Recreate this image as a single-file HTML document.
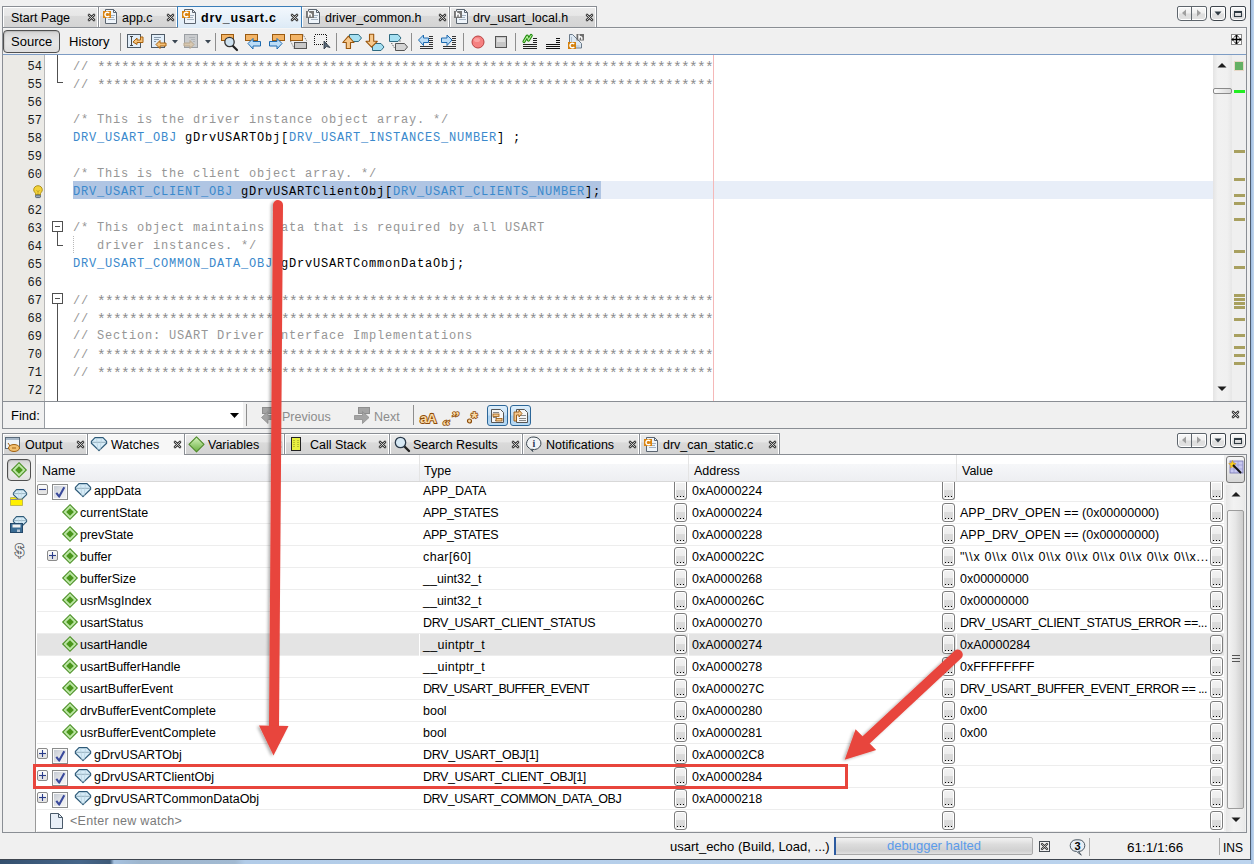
<!DOCTYPE html><html><head><meta charset="utf-8"><style>
*{box-sizing:border-box}
html,body{margin:0;padding:0}
body{width:1254px;height:864px;overflow:hidden;position:relative;background:#F0F0F0;font-family:"Liberation Sans",sans-serif;font-size:12.5px;color:#000}
.a{position:absolute}
svg{position:absolute;overflow:visible}
.tab{position:absolute;top:6px;height:22px;border:1px solid #8A8E94;border-bottom:none;background:linear-gradient(#EBEBEB 0,#E7E7E7 40%,#DADADA 44%,#D3D3D3 100%);box-shadow:inset 1px 1px 0 #fff,inset -1px 0 0 #fff}
.code{position:absolute;left:73px;font-family:"Liberation Mono",monospace;font-size:12px;letter-spacing:0.8px;white-space:pre;line-height:18px;height:18px}
.ln{position:absolute;left:3px;width:38px;text-align:right;font-family:"Liberation Mono",monospace;font-size:12px;letter-spacing:0;line-height:18px;color:#1A1A1A}
.c{color:#969696}
.st{font-size:14.5px;letter-spacing:-0.7px;position:relative;top:2px;color:#8C8C8C}
.m{color:#3A89CC}
.row{position:absolute;left:37px;width:1187px;height:22px;border-bottom:1px solid #EDEDED;background:#fff}
.btn{position:absolute;width:13px;height:19px;border:1px solid #7C7C7C;border-radius:3px;background:linear-gradient(#F3F3F3 0,#EDEDED 45%,#DCDCDC 50%,#D6D6D6 100%);box-shadow:inset 0 0 0 1px #fff}
.dots{position:absolute;left:2px;top:14px;width:7px;height:1px;background:linear-gradient(90deg,#000 0 1px,transparent 1px 3px) 0 0/3px 1px repeat-x;box-shadow:0 1px 0 #F0F0F0}
.t13{font-size:13px}
</style></head><body>
<div class="a" style="left:1250px;top:0px;width:1px;height:860px;background:#4E5D70"></div>
<div class="a" style="left:1251px;top:0px;width:3px;height:864px;background:linear-gradient(90deg,#9DBBE0,#C4D8EE)"></div>
<div class="a" style="left:0px;top:859px;width:1251px;height:1px;background:#3F4650"></div>
<div class="a" style="left:0px;top:860px;width:1251px;height:4px;background:linear-gradient(90deg,#34506E 0,#46668A 80px,#3E5A78 110px,#A6C2E0 114px,#9EB6CE 140px,#A2BAD2 235px,#B2CCE8 245px,#BCD4EE 100%)"></div>
<div class="tab" style="left:2px;top:6px;width:97px;height:22px"></div>
<span class="a" style="left:11px;top:11px;white-space:nowrap;font-size:12.5px">Start Page</span>
<svg style="left:88px;top:14px" width="7" height="7" viewBox="0 0 7 7"><path d="M1 1L6 6M6 1L1 6" stroke="#3A3A3A" stroke-width="2.6" stroke-linecap="round"/><path d="M1 1L6 6M6 1L1 6" stroke="#E8E8E8" stroke-width="0.8" stroke-linecap="round"/></svg>
<div class="tab" style="left:98px;top:6px;width:80px;height:22px"></div>
<svg style="left:103px;top:9px" width="15" height="15" viewBox="0 0 15 15"><path d="M2.5 0.5h8l3 3v11h-11z" fill="#EEF4FA" stroke="#5B6570"/><path d="M10.5 0.5v3h3" fill="none" stroke="#5B6570"/><path d="M7 6.5h5M7 8.5h4M5 10.5h7" stroke="#9AAABB" stroke-width="0.9"/><rect x="0" y="2" width="8" height="7" fill="#DA8512"/><path d="M6.2 4.2A2.3 2.3 0 1 0 6.2 6.8" stroke="#fff" stroke-width="1.5" fill="none"/></svg>
<span class="a" style="left:122px;top:11px;white-space:nowrap;font-size:12.5px">app.c</span>
<svg style="left:167px;top:14px" width="7" height="7" viewBox="0 0 7 7"><path d="M1 1L6 6M6 1L1 6" stroke="#3A3A3A" stroke-width="2.6" stroke-linecap="round"/><path d="M1 1L6 6M6 1L1 6" stroke="#E8E8E8" stroke-width="0.8" stroke-linecap="round"/></svg>
<div class="tab" style="left:301px;top:6px;width:149px;height:22px"></div>
<svg style="left:306px;top:9px" width="15" height="15" viewBox="0 0 15 15"><path d="M2.5 0.5h8l3 3v11h-11z" fill="#EEF4FA" stroke="#5B6570"/><path d="M10.5 0.5v3h3" fill="none" stroke="#5B6570"/><path d="M7 6.5h5M7 8.5h4M5 10.5h7" stroke="#9AAABB" stroke-width="0.9"/><rect x="0" y="2" width="8" height="7" fill="#767676"/><path d="M2.6 2.6v5.2M2.6 5.8c0.3-1.2 2.8-1.6 2.8 0.2v1.8" stroke="#fff" stroke-width="1.4" fill="none"/></svg>
<span class="a" style="left:325px;top:11px;white-space:nowrap;font-size:12.5px">driver_common.h</span>
<svg style="left:439px;top:14px" width="7" height="7" viewBox="0 0 7 7"><path d="M1 1L6 6M6 1L1 6" stroke="#3A3A3A" stroke-width="2.6" stroke-linecap="round"/><path d="M1 1L6 6M6 1L1 6" stroke="#E8E8E8" stroke-width="0.8" stroke-linecap="round"/></svg>
<div class="tab" style="left:449px;top:6px;width:148px;height:22px"></div>
<svg style="left:454px;top:9px" width="15" height="15" viewBox="0 0 15 15"><path d="M2.5 0.5h8l3 3v11h-11z" fill="#EEF4FA" stroke="#5B6570"/><path d="M10.5 0.5v3h3" fill="none" stroke="#5B6570"/><path d="M7 6.5h5M7 8.5h4M5 10.5h7" stroke="#9AAABB" stroke-width="0.9"/><rect x="0" y="2" width="8" height="7" fill="#767676"/><path d="M2.6 2.6v5.2M2.6 5.8c0.3-1.2 2.8-1.6 2.8 0.2v1.8" stroke="#fff" stroke-width="1.4" fill="none"/></svg>
<span class="a" style="left:473px;top:11px;white-space:nowrap;font-size:12.5px">drv_usart_local.h</span>
<svg style="left:586px;top:14px" width="7" height="7" viewBox="0 0 7 7"><path d="M1 1L6 6M6 1L1 6" stroke="#3A3A3A" stroke-width="2.6" stroke-linecap="round"/><path d="M1 1L6 6M6 1L1 6" stroke="#E8E8E8" stroke-width="0.8" stroke-linecap="round"/></svg>
<div class="tab" style="left:177px;top:6px;width:125px;height:23px;border-color:#3A7DB8;background:linear-gradient(#F3F8FD,#DCEAF6);box-shadow:none"></div>
<svg style="left:182px;top:9px" width="15" height="15" viewBox="0 0 15 15"><path d="M2.5 0.5h8l3 3v11h-11z" fill="#EEF4FA" stroke="#5B6570"/><path d="M10.5 0.5v3h3" fill="none" stroke="#5B6570"/><path d="M7 6.5h5M7 8.5h4M5 10.5h7" stroke="#9AAABB" stroke-width="0.9"/><rect x="0" y="2" width="8" height="7" fill="#DA8512"/><path d="M6.2 4.2A2.3 2.3 0 1 0 6.2 6.8" stroke="#fff" stroke-width="1.5" fill="none"/></svg>
<span class="a" style="left:201px;top:11px;white-space:nowrap;font-size:12.5px;font-weight:bold;letter-spacing:0.75px">drv_usart.c</span>
<svg style="left:291px;top:14px" width="7" height="7" viewBox="0 0 7 7"><path d="M1 1L6 6M6 1L1 6" stroke="#3A3A3A" stroke-width="2.6" stroke-linecap="round"/><path d="M1 1L6 6M6 1L1 6" stroke="#E8E8E8" stroke-width="0.8" stroke-linecap="round"/></svg>
<div class="a" style="left:1177px;top:6px;width:30px;height:15px;border:1px solid #5E656C;border-radius:2px 2px 4px 4px;background:linear-gradient(#F8F8F8 0,#F0F0F0 45%,#DEDEDE 55%,#E2E2E2 100%);box-shadow:inset 0 0 0 1px #fff"></div>
<svg style="left:1177px;top:6px" width="30" height="15" viewBox="0 0 30 15"><path d="M14.5 1v13" stroke="#5E656C"/><path d="M9 3.5v7l-4-3.5z" fill="#A0A0A0"/><path d="M20 3.5v7l4-3.5z" fill="#A0A0A0"/></svg>
<div class="a" style="left:1210px;top:6px;width:16px;height:15px;border:1px solid #3E454C;border-radius:2px 2px 4px 4px;background:linear-gradient(#F8F8F8 0,#F0F0F0 45%,#DEDEDE 55%,#E2E2E2 100%);box-shadow:inset 0 0 0 1px #fff"></div>
<svg style="left:1210px;top:6px" width="16" height="15" viewBox="0 0 16 15"><path d="M4.5 5.5h7l-3.5 4z" fill="#2F3A42"/></svg>
<div class="a" style="left:1230px;top:6px;width:16px;height:15px;border:1px solid #3E454C;border-radius:2px 2px 4px 4px;background:linear-gradient(#F8F8F8 0,#F0F0F0 45%,#DEDEDE 55%,#E2E2E2 100%);box-shadow:inset 0 0 0 1px #fff"></div>
<svg style="left:1230px;top:6px" width="16" height="15" viewBox="0 0 16 15"><rect x="4.5" y="5.5" width="7" height="5" fill="none" stroke="#2F3A42" stroke-width="1.1"/><rect x="4" y="5" width="8" height="2" fill="#2F3A42"/></svg>
<div class="a" style="left:2px;top:27px;width:1245px;height:402px;border:1px solid #8A8E94;background:#F0F0F0"></div>
<div class="a" style="left:3px;top:28px;width:1243px;height:1px;background:#F6F6F6"></div>
<div class="a" style="left:178px;top:27px;width:123px;height:1px;background:#DBEAF6"></div>
<div class="a" style="left:3px;top:30px;width:57px;height:23px;border:1px solid #505050;border-radius:4px;background:linear-gradient(#D2D2D2 0,#E2E2E2 30%,#E6E6E6 60%,#DEDEDE 100%);box-shadow:inset 1px 1px 1px rgba(0,0,0,0.12)"></div>
<span class="a" style="left:11px;top:34px;white-space:nowrap;font-size:13px">Source</span>
<span class="a" style="left:69px;top:34px;white-space:nowrap;font-size:13px">History</span>
<div class="a" style="left:120px;top:33px;width:1px;height:18px;background:#8E8E8E"></div>
<div class="a" style="left:215px;top:33px;width:1px;height:18px;background:#8E8E8E"></div>
<div class="a" style="left:336px;top:33px;width:1px;height:18px;background:#8E8E8E"></div>
<div class="a" style="left:411px;top:33px;width:1px;height:18px;background:#8E8E8E"></div>
<div class="a" style="left:463px;top:33px;width:1px;height:18px;background:#8E8E8E"></div>
<div class="a" style="left:515px;top:33px;width:1px;height:18px;background:#8E8E8E"></div>
<svg style="left:127px;top:34px" width="17" height="15" viewBox="0 0 17 15"><rect x="0.5" y="0.5" width="13" height="13" fill="#E2EEF9" stroke="#4E5A66"/><path d="M3 2.5h3M4.5 2.5v9M3 11.5h3" stroke="#333" stroke-width="0.9"/><path d="M6 8l4-4v2h3.5v-3h2.5v5.5h-6v2z" fill="#F5C27A" stroke="#A8620E"/></svg>
<svg style="left:151px;top:34px" width="17" height="15" viewBox="0 0 17 15"><rect x="0.5" y="0.5" width="13" height="13" fill="#E2EEF9" stroke="#4E5A66"/><path d="M3 3.5h7M3 5.5h5M3 7.5h2" stroke="#8899AA"/><path d="M5 10.5l4-4v2.5h6v3h-6v2.5z" fill="#F5C27A" stroke="#A8620E"/></svg>
<svg style="left:172px;top:40px" width="6" height="4" viewBox="0 0 6 4"><path d="M0 0h6l-3 3.5z" fill="#3A4652"/></svg>
<svg style="left:184px;top:34px" width="16" height="15" viewBox="0 0 16 15"><rect x="0.5" y="0.5" width="13" height="13" fill="#CACCCE" stroke="#9A9EA2"/><path d="M5 3.5h6M7 5.5h4M9 7.5h2" stroke="#B0B4B8"/><path d="M10 10.5l-4-4v2.5h-6v3h6v2.5z" fill="#D8C8B0" stroke="#B8A890"/></svg>
<svg style="left:205px;top:40px" width="6" height="4" viewBox="0 0 6 4"><path d="M0 0h6l-3 3.5z" fill="#3A4652"/></svg>
<svg style="left:221px;top:34px" width="18" height="16" viewBox="0 0 18 16"><rect x="0.5" y="0.5" width="12" height="6" fill="#F3B466" stroke="#9A5A10"/><path d="M11 11l5 5" stroke="#222" stroke-width="2.2" stroke-linecap="round"/><circle cx="8.5" cy="8" r="4.7" fill="#CFE2F0" stroke="#333" stroke-width="1.3"/></svg>
<svg style="left:245px;top:34px" width="17" height="16" viewBox="0 0 17 16"><rect x="0.5" y="0.5" width="12" height="6" fill="#F3B466" stroke="#9A5A10"/><path d="M3 9.5l5-5v3h7.5v4.5h-7.5v3z" fill="#BCDDF7" stroke="#1E6BB0"/></svg>
<svg style="left:268px;top:34px" width="17" height="16" viewBox="0 0 17 16"><rect x="4.5" y="0.5" width="12" height="6" fill="#F3B466" stroke="#9A5A10"/><path d="M14 9.5l-5-5v3h-7.5v4.5h7.5v3z" fill="#BCDDF7" stroke="#1E6BB0"/></svg>
<svg style="left:290px;top:34px" width="18" height="16" viewBox="0 0 18 16"><rect x="0.5" y="0.5" width="12" height="6" fill="#F3B466" stroke="#9A5A10"/><path d="M0.5 7l4 8M13 0.5l4 7" stroke="#666" stroke-dasharray="1 1"/><rect x="4.5" y="8.5" width="12" height="6" fill="#C8C8C8" stroke="#555"/></svg>
<svg style="left:313px;top:34px" width="18" height="16" viewBox="0 0 18 16"><rect x="1.5" y="0.5" width="12" height="10" fill="none" stroke="#111" stroke-dasharray="1 1" shape-rendering="crispEdges"/><path d="M11 7v8l2.5-2.5l3.5 1z" fill="#5A6A78" stroke="#2A3440" stroke-width="0.8"/></svg>
<svg style="left:340px;top:31px" width="70" height="21" viewBox="0 0 70 21"><path d="M9.5 3.5h9l3 3.5-3 3.5h-9z" fill="#A6E0F2" stroke="#2E6A80" stroke-width="1"/><path d="M8.4 5.2L14 11.5h-3.5v6h-4.2v-6h-3.5z" fill="#F7C98C" stroke="#9A560C" stroke-width="1.1" stroke-linejoin="round"/><path d="M32.5 12.5h8.5l3 3.5-3 3.5h-8.5z" fill="#A6E0F2" stroke="#2E6A80" stroke-width="1"/><path d="M29.5 3.3h4.2v7h3.6L31.6 16.2L26 10.3h3.5z" fill="#F7C98C" stroke="#9A560C" stroke-width="1.1" stroke-linejoin="round"/><path d="M49.5 3.5h8.5l3 3.5-3 3.5h-8.5z" fill="#A6E0F2" stroke="#2E6A80" stroke-width="1"/><path d="M51.5 12l3 5M60 9.5v1" stroke="#333" stroke-width="1" stroke-dasharray="1 1.2"/><path d="M55.5 12.5h9l3 3.5-3 3.5h-9z" fill="#D4D4D4" stroke="#555" stroke-width="1"/></svg>
<svg style="left:418px;top:34px" width="17" height="16" viewBox="0 0 17 16"><path d="M11 2.5h4M11 4.5h4M11 6.5h4M11 8.5h4M11 10.5h4M2 12.5h13M2 14.5h13" stroke="#333" stroke-width="1"/><path d="M0.5 6l5-5v3h5v4.5h-5v3z" fill="#BCDDF7" stroke="#1E6BB0"/></svg>
<svg style="left:441px;top:34px" width="17" height="16" viewBox="0 0 17 16"><path d="M11 2.5h4M11 4.5h4M11 6.5h4M11 8.5h4M11 10.5h4M2 12.5h13M2 14.5h13" stroke="#333" stroke-width="1"/><path d="M11 6l-5-5v3h-5.5v4.5h5.5v3z" fill="#BCDDF7" stroke="#1E6BB0"/></svg>
<svg style="left:471px;top:35px" width="14" height="14" viewBox="0 0 14 14"><circle cx="7" cy="7" r="6" fill="#F58080" stroke="#B84040"/><ellipse cx="6" cy="5" rx="3" ry="2" fill="#FFB8B8" opacity="0.6"/></svg>
<svg style="left:495px;top:36px" width="13" height="13" viewBox="0 0 13 13"><rect x="0.5" y="0.5" width="11" height="11" fill="#C6C6C6" stroke="#555" stroke-width="1"/><rect x="2" y="2" width="8" height="4" fill="#E0E0E0"/></svg>
<svg style="left:518px;top:31px" width="72" height="21" viewBox="0 0 72 21"><path d="M6 10.5L9.2 5.2L10.5 9L13.2 4.5" stroke="#1E8A0A" stroke-width="3.2" fill="none" stroke-linecap="round" stroke-linejoin="round"/><path d="M6 10.5L9.2 5.2L10.5 9L13.2 4.5" stroke="#B8F0A0" stroke-width="1.1" fill="none" stroke-linecap="round" stroke-linejoin="round"/><path d="M15 7.5h4M15 9.5h4M15 11.5h4M5 13.5h14M5 15.5h14M5 17.5h14" stroke="#222" stroke-width="1"/><path d="M38 7.5h4M38 9.5h4M38 11.5h4M28 13.5h14M28 15.5h14M28 17.5h14" stroke="#111" stroke-width="1.1"/><path d="M51.5 3.5h3l9 9v4.5h-12z" fill="#DDE8F2" stroke="#6A7A8A" stroke-width="1"/><path d="M53.5 6v9h8" fill="none" stroke="#A8B8C8" stroke-width="0.8"/><rect x="58.5" y="3" width="7.5" height="6.5" fill="#6E6E6E"/><path d="M61 3.6v5.2M61 6.8c0.3-1.2 2.8-1.6 2.8 0.2v1.8" stroke="#fff" stroke-width="1.4" fill="none"/><rect x="50" y="11" width="8" height="7" fill="#D4800C"/><path d="M56.2 13.2A2.3 2.3 0 1 0 56.2 15.8" stroke="#fff" stroke-width="1.5" fill="none"/></svg>
<svg style="left:1231px;top:34px" width="11" height="11" viewBox="0 0 11 11"><rect x="0.5" y="0.5" width="10" height="10" fill="#fff" stroke="#888"/><path d="M5.5 1v9M1 5.5h9" stroke="#000" stroke-width="1.4"/><path d="M5.5 1l-2 2M5.5 1l2 2M5.5 10l-2-2M5.5 10l2-2M1 5.5l2-2M1 5.5l2 2M10 5.5l-2-2M10 5.5l-2 2" stroke="#000"/></svg>
<div class="a" style="left:3px;top:54px;width:1243px;height:1px;background:#7D9CC4"></div>
<div class="a" style="left:3px;top:55px;width:1243px;height:346px;background:#fff"></div>
<div class="a" style="left:3px;top:55px;width:41px;height:346px;background:#EBEAE6"></div>
<div class="a" style="left:44px;top:55px;width:1px;height:346px;background:#B8B8B8"></div>
<div class="a" style="left:601px;top:181px;width:612px;height:18px;background:#E8EEF8"></div>
<div class="a" style="left:713px;top:55px;width:1px;height:346px;background:#F5B8B8"></div>
<div class="a" style="left:73px;top:181px;width:528px;height:18px;background:#B0C5E3"></div>
<div class="a" style="left:1213px;top:55px;width:19px;height:346px;background:linear-gradient(90deg,#E4E4E4,#F1F1F1 25%,#F0F0F0 75%,#E6E6E6)"></div>
<div class="a" style="left:1232px;top:55px;width:14px;height:346px;background:#EFEFEF"></div>
<div class="ln" style="top:58px;width:39px">54</div>
<div class="code" style="top:57px"><span class="c">// <span class="st">*****************************************************************************</span></span></div>
<div class="ln" style="top:76px;width:39px">55</div>
<div class="code" style="top:75px"><span class="c">// <span class="st">*****************************************************************************</span></span></div>
<div class="ln" style="top:94px;width:39px">56</div>
<div class="code" style="top:93px"></div>
<div class="ln" style="top:112px;width:39px">57</div>
<div class="code" style="top:111px"><span class="c">/* This is the driver instance object array. */</span></div>
<div class="ln" style="top:130px;width:39px">58</div>
<div class="code" style="top:129px"><span class="m">DRV_USART_OBJ</span> gDrvUSARTObj[<span class="m">DRV_USART_INSTANCES_NUMBER</span>] ;</div>
<div class="ln" style="top:148px;width:39px">59</div>
<div class="code" style="top:147px"></div>
<div class="ln" style="top:166px;width:39px">60</div>
<div class="code" style="top:165px"><span class="c">/* This is the client object array. */</span></div>
<div class="code" style="top:183px"><span class="m">DRV_USART_CLIENT_OBJ</span> gDrvUSARTClientObj[<span class="m">DRV_USART_CLIENTS_NUMBER</span>];</div>
<div class="ln" style="top:202px;width:39px">62</div>
<div class="code" style="top:201px"></div>
<div class="ln" style="top:220px;width:39px">63</div>
<div class="code" style="top:219px"><span class="c">/* This object maintains data that is required by all USART</span></div>
<div class="ln" style="top:238px;width:39px">64</div>
<div class="code" style="top:237px"><span class="c">   driver instances. */</span></div>
<div class="ln" style="top:256px;width:39px">65</div>
<div class="code" style="top:255px"><span class="m">DRV_USART_COMMON_DATA_OBJ</span> gDrvUSARTCommonDataObj;</div>
<div class="ln" style="top:274px;width:39px">66</div>
<div class="code" style="top:273px"></div>
<div class="ln" style="top:292px;width:39px">67</div>
<div class="code" style="top:291px"><span class="c">// <span class="st">*****************************************************************************</span></span></div>
<div class="ln" style="top:310px;width:39px">68</div>
<div class="code" style="top:309px"><span class="c">// <span class="st">*****************************************************************************</span></span></div>
<div class="ln" style="top:328px;width:39px">69</div>
<div class="code" style="top:327px"><span class="c">// Section: USART Driver Interface Implementations</span></div>
<div class="ln" style="top:346px;width:39px">70</div>
<div class="code" style="top:345px"><span class="c">// <span class="st">*****************************************************************************</span></span></div>
<div class="ln" style="top:364px;width:39px">71</div>
<div class="code" style="top:363px"><span class="c">// <span class="st">*****************************************************************************</span></span></div>
<div class="ln" style="top:382px;width:39px">72</div>
<div class="code" style="top:381px"></div>
<div class="a" style="left:57px;top:55px;width:1px;height:28px;background:#505050"></div>
<div class="a" style="left:57px;top:82px;width:6px;height:1px;background:#505050"></div>
<div class="a" style="left:52px;top:221px;width:11px;height:11px;border:1px solid #505050;background:#fff"></div>
<div class="a" style="left:55px;top:226px;width:5px;height:1px;background:#505050"></div>
<div class="a" style="left:57px;top:232px;width:1px;height:14px;background:#505050"></div>
<div class="a" style="left:57px;top:245px;width:6px;height:1px;background:#505050"></div>
<div class="a" style="left:52px;top:293px;width:11px;height:11px;border:1px solid #505050;background:#fff"></div>
<div class="a" style="left:55px;top:298px;width:5px;height:1px;background:#505050"></div>
<div class="a" style="left:57px;top:304px;width:1px;height:97px;background:#505050"></div>
<div class="a" style="left:73px;top:236px;width:1px;height:18px;background:repeating-linear-gradient(#B8B8B8 0 1px,transparent 1px 2px)"></div>
<svg style="left:32.5px;top:184.5px" width="10" height="14" viewBox="0 0 10 14"><path d="M5 0.7C2.5 0.7 0.7 2.5 0.7 4.8c0 1.8 1.2 2.6 1.8 3.6v1.6h5v-1.6c0.6-1 1.8-1.8 1.8-3.6C9.3 2.5 7.5 0.7 5 0.7z" fill="#F2D23A" stroke="#A88A10" stroke-width="0.9"/><path d="M3.5 5l1.5 2 1.5-2M5 7v3" stroke="#B89820" stroke-width="0.7" fill="none"/><rect x="2.5" y="10" width="5" height="2.6" rx="1" fill="#98A8B8" stroke="#3A4A5A" stroke-width="0.8"/></svg>
<svg style="left:1217px;top:62px" width="10" height="6" viewBox="0 0 10 6"><path d="M0.5 5.5L5 1L9.5 5.5z" fill="#1E1E1E"/></svg>
<svg style="left:1217px;top:386px" width="10" height="6" viewBox="0 0 10 6"><path d="M0.5 0.5L5 5L9.5 0.5z" fill="#1E1E1E"/></svg>
<div class="a" style="left:1213px;top:88px;width:19px;height:6px;border:1px solid #8A8A8A;border-radius:2px;background:linear-gradient(90deg,#FAFAFA,#D8D8D8)"></div>
<div class="a" style="left:1235px;top:62px;width:8px;height:8px;background:#64B064;box-shadow:0 0 0 1px #E8D8C8"></div>
<div class="a" style="left:1234px;top:90px;width:11px;height:3px;background:#22EE22"></div>
<div class="a" style="left:1234px;top:150px;width:11px;height:3px;background:#A8A060"></div>
<div class="a" style="left:1234px;top:178px;width:11px;height:3px;background:#A8A060"></div>
<div class="a" style="left:1234px;top:194px;width:11px;height:3px;background:#A8A060"></div>
<div class="a" style="left:1234px;top:202px;width:11px;height:3px;background:#A8A060"></div>
<div class="a" style="left:1234px;top:218px;width:11px;height:3px;background:#A8A060"></div>
<div class="a" style="left:1234px;top:250px;width:11px;height:3px;background:#A8A060"></div>
<div class="a" style="left:1234px;top:266px;width:11px;height:3px;background:#A8A060"></div>
<div class="a" style="left:1234px;top:294px;width:11px;height:3px;background:#A8A060"></div>
<div class="a" style="left:1234px;top:298px;width:11px;height:3px;background:#A8A060"></div>
<div class="a" style="left:1234px;top:302px;width:11px;height:3px;background:#A8A060"></div>
<div class="a" style="left:1234px;top:306px;width:11px;height:3px;background:#A8A060"></div>
<div class="a" style="left:1234px;top:318px;width:11px;height:3px;background:#A8A060"></div>
<div class="a" style="left:1234px;top:334px;width:11px;height:3px;background:#A8A060"></div>
<div class="a" style="left:1234px;top:346px;width:11px;height:3px;background:#A8A060"></div>
<div class="a" style="left:1234px;top:354px;width:11px;height:3px;background:#A8A060"></div>
<div class="a" style="left:1234px;top:362px;width:11px;height:3px;background:#A8A060"></div>
<div class="a" style="left:3px;top:401px;width:1243px;height:1px;background:#8A8E94"></div>
<span class="a" style="left:11px;top:408px;white-space:nowrap;font-size:13px">Find:</span>
<div class="a" style="left:44px;top:402px;width:199px;height:26px;border-left:1px solid #9A9EA4;background:#fff"></div>
<svg style="left:230px;top:413px" width="10" height="6" viewBox="0 0 10 6"><path d="M0 0h9l-4.5 5z" fill="#000"/></svg>
<div class="a" style="left:246px;top:404px;width:1px;height:22px;background:#8E8E8E"></div>
<div class="a" style="left:413px;top:405px;width:1px;height:20px;background:#8E8E8E"></div>
<svg style="left:260px;top:405px" width="18" height="18" viewBox="0 0 18 18"><rect x="2.5" y="2.5" width="11" height="6" fill="#A4A4A4" stroke="#8E8E8E"/><path d="M16 10.5h-8v-4l-6.5 6l6.5 6v-4h8z" fill="#A4A4A4" stroke="#8E8E8E" stroke-width="0.8"/></svg>
<span class="a" style="left:282px;top:410px;white-space:nowrap;font-size:12.5px;color:#8C8C8C">Previous</span>
<svg style="left:354px;top:405px" width="18" height="18" viewBox="0 0 18 18"><rect x="4.5" y="2.5" width="11" height="6" fill="#A4A4A4" stroke="#8E8E8E"/><path d="M0.5 10.5h8v-4l6.5 6l-6.5 6v-4h-8z" fill="#A4A4A4" stroke="#8E8E8E" stroke-width="0.8"/></svg>
<span class="a" style="left:374px;top:410px;white-space:nowrap;font-size:12.5px;color:#8C8C8C">Next</span>
<svg style="left:419px;top:408px" width="18" height="16" viewBox="0 0 18 16"><text x="1" y="14.5" font-size="13.5" font-weight="bold" font-family="Liberation Sans" fill="#F9D9A6" stroke="#8C4C0A" stroke-width="1.8" paint-order="stroke" letter-spacing="-0.6">aA</text></svg>
<svg style="left:442px;top:408px" width="18" height="16" viewBox="0 0 18 16"><text x="0.5" y="22" font-size="15" font-weight="bold" font-family="Liberation Serif" fill="#F9D9A6" stroke="#8C4C0A" stroke-width="1.6" paint-order="stroke">“</text><text x="10" y="14" font-size="15" font-weight="bold" font-family="Liberation Serif" fill="#F9D9A6" stroke="#8C4C0A" stroke-width="1.6" paint-order="stroke">”</text></svg>
<svg style="left:466px;top:408px" width="16" height="16" viewBox="0 0 16 16"><circle cx="3.5" cy="13" r="2" fill="#F9D9A6" stroke="#8C4C0A" stroke-width="1.2"/><text x="5" y="16" font-size="17" font-weight="bold" font-family="Liberation Sans" fill="#F9D9A6" stroke="#8C4C0A" stroke-width="1.5" paint-order="stroke">*</text></svg>
<div class="a" style="left:487px;top:405px;width:21px;height:21px;border:1px solid #2C6698;border-radius:3px;background:linear-gradient(#DDEEFB 0,#C8E2F6 45%,#A9D1F2 55%,#B8DAF4 100%)"></div>
<div class="a" style="left:510px;top:405px;width:21px;height:21px;border:1px solid #2C6698;border-radius:3px;background:linear-gradient(#DDEEFB 0,#C8E2F6 45%,#A9D1F2 55%,#B8DAF4 100%)"></div>
<svg style="left:491px;top:409px" width="14" height="14" viewBox="0 0 14 14"><path d="M0.5 0.5h9l3 3v10h-12z" fill="#F6F6F6" stroke="#555"/><path d="M2 3.5h6M2 8.5h4M4 11.5h6" stroke="#888"/><rect x="2" y="5" width="6" height="2.5" fill="#F4C890" stroke="#9A5A10" stroke-width="0.8"/><rect x="5" y="9.5" width="6" height="2.5" fill="#F4C890" stroke="#9A5A10" stroke-width="0.8"/></svg>
<svg style="left:513px;top:409px" width="15" height="14" viewBox="0 0 15 14"><path d="M3.5 0.5h8l3 3v10h-11z" fill="#F6F6F6" stroke="#555"/><path d="M6 6.5h7M6 9.5h7M6 11.5h7" stroke="#888"/><path d="M1 12v-9h5v-2l3 3.5-3 3.5v-2h-2.5v6z" fill="#F4C890" stroke="#9A5A10" stroke-width="0.9"/></svg>
<svg style="left:1232px;top:411px" width="7" height="7" viewBox="0 0 7 7"><path d="M1 1L6 6M6 1L1 6" stroke="#3A3A3A" stroke-width="2.6" stroke-linecap="round"/><path d="M1 1L6 6M6 1L1 6" stroke="#E8E8E8" stroke-width="0.8" stroke-linecap="round"/></svg>
<div class="tab" style="top:433px;left:2px;width:86px;height:21px"></div>
<svg style="left:77px;top:441px" width="7" height="7" viewBox="0 0 7 7"><path d="M1 1L6 6M6 1L1 6" stroke="#3A3A3A" stroke-width="2.6" stroke-linecap="round"/><path d="M1 1L6 6M6 1L1 6" stroke="#E8E8E8" stroke-width="0.8" stroke-linecap="round"/></svg>
<div class="tab" style="top:433px;left:184px;width:101px;height:21px"></div>
<svg style="left:274px;top:441px" width="7" height="7" viewBox="0 0 7 7"><path d="M1 1L6 6M6 1L1 6" stroke="#3A3A3A" stroke-width="2.6" stroke-linecap="round"/><path d="M1 1L6 6M6 1L1 6" stroke="#E8E8E8" stroke-width="0.8" stroke-linecap="round"/></svg>
<div class="tab" style="top:433px;left:284px;width:106px;height:21px"></div>
<svg style="left:379px;top:441px" width="7" height="7" viewBox="0 0 7 7"><path d="M1 1L6 6M6 1L1 6" stroke="#3A3A3A" stroke-width="2.6" stroke-linecap="round"/><path d="M1 1L6 6M6 1L1 6" stroke="#E8E8E8" stroke-width="0.8" stroke-linecap="round"/></svg>
<div class="tab" style="top:433px;left:389px;width:134px;height:21px"></div>
<svg style="left:512px;top:441px" width="7" height="7" viewBox="0 0 7 7"><path d="M1 1L6 6M6 1L1 6" stroke="#3A3A3A" stroke-width="2.6" stroke-linecap="round"/><path d="M1 1L6 6M6 1L1 6" stroke="#E8E8E8" stroke-width="0.8" stroke-linecap="round"/></svg>
<div class="tab" style="top:433px;left:522px;width:118px;height:21px"></div>
<svg style="left:629px;top:441px" width="7" height="7" viewBox="0 0 7 7"><path d="M1 1L6 6M6 1L1 6" stroke="#3A3A3A" stroke-width="2.6" stroke-linecap="round"/><path d="M1 1L6 6M6 1L1 6" stroke="#E8E8E8" stroke-width="0.8" stroke-linecap="round"/></svg>
<div class="tab" style="top:433px;left:639px;width:141px;height:21px"></div>
<svg style="left:769px;top:441px" width="7" height="7" viewBox="0 0 7 7"><path d="M1 1L6 6M6 1L1 6" stroke="#3A3A3A" stroke-width="2.6" stroke-linecap="round"/><path d="M1 1L6 6M6 1L1 6" stroke="#E8E8E8" stroke-width="0.8" stroke-linecap="round"/></svg>
<div class="tab" style="top:433px;left:87px;width:98px;height:22px;background:#F7F7F7;box-shadow:inset 1px 1px 0 #fff"></div>
<svg style="left:174px;top:441px" width="7" height="7" viewBox="0 0 7 7"><path d="M1 1L6 6M6 1L1 6" stroke="#3A3A3A" stroke-width="2.6" stroke-linecap="round"/><path d="M1 1L6 6M6 1L1 6" stroke="#E8E8E8" stroke-width="0.8" stroke-linecap="round"/></svg>
<svg style="left:5px;top:437px" width="16" height="16" viewBox="0 0 16 16"><rect x="0.5" y="0.5" width="14" height="11" fill="#EEF3F8" stroke="#5A6A7A"/><rect x="1" y="1" width="13" height="2" fill="#A8B8C8"/><ellipse cx="9" cy="11" rx="5.5" ry="3.5" fill="#F2C070" stroke="#A06010"/><path d="M5 9l-2-3" stroke="#A06010"/><path d="M7 11h4" stroke="#A06010"/></svg>
<span class="a" style="left:25px;top:438px;white-space:nowrap;font-size:12.5px">Output</span>
<svg style="left:91px;top:437px" width="17" height="15" viewBox="0 0 17 15"><path d="M4 0.6H12L15.6 4.4V6.2L8 13.6L0.4 6.2V4.4Z" fill="#D6ECF8" stroke="#2E5A78" stroke-width="1.2" stroke-linejoin="round"/><path d="M0.8 5.3H15.2" stroke="#8AA6B6" stroke-width="0.9"/><path d="M5.5 1L7 13M10.5 1L9 13" stroke="#B8D0DC" stroke-width="0.7" fill="none"/></svg>
<span class="a" style="left:111px;top:438px;white-space:nowrap;font-size:12.5px">Watches</span>
<svg style="left:188px;top:436px" width="17" height="17" viewBox="0 0 17 17"><defs><linearGradient id="vg" x1="0" y1="0" x2="0" y2="1"><stop offset="0" stop-color="#D8F4C0"/><stop offset="1" stop-color="#6AB040"/></linearGradient></defs><path d="M8.5 0.8L16 8.3L8.5 15.8L1 8.3z" fill="url(#vg)" stroke="#4E8A2A" stroke-width="1.1" stroke-linejoin="round"/></svg>
<span class="a" style="left:208px;top:438px;white-space:nowrap;font-size:12.5px">Variables</span>
<svg style="left:291px;top:437px" width="11" height="14" viewBox="0 0 11 14"><rect x="0.5" y="0.5" width="9" height="13" fill="#E8F040" stroke="#222"/><path d="M3 3v8M7 3v8" stroke="#889020" stroke-dasharray="1 1"/></svg>
<span class="a" style="left:310px;top:438px;white-space:nowrap;font-size:12.5px">Call Stack</span>
<svg style="left:394px;top:436px" width="16" height="16" viewBox="0 0 16 16"><path d="M10 10l5 5" stroke="#222" stroke-width="2.4" stroke-linecap="round"/><circle cx="6.5" cy="6.5" r="5.2" fill="#D6E8F4" stroke="#2A3A4A" stroke-width="1.3"/></svg>
<span class="a" style="left:413px;top:438px;white-space:nowrap;font-size:12.5px">Search Results</span>
<svg style="left:526px;top:436px" width="16" height="16" viewBox="0 0 16 16"><path d="M8 1a7 6.3 0 1 1-2.5 12.2L7 15.5l-3.3-3A7 6.3 0 0 1 8 1z" fill="#F2F4F6" stroke="#3A4650" stroke-width="1"/><text x="8" y="11" font-size="10" font-weight="bold" font-family="Liberation Serif" fill="#2A3A5A" text-anchor="middle">i</text></svg>
<span class="a" style="left:546px;top:438px;white-space:nowrap;font-size:12.5px">Notifications</span>
<svg style="left:644px;top:437px" width="15" height="15" viewBox="0 0 15 15"><path d="M2.5 0.5h8l3 3v11h-11z" fill="#EEF4FA" stroke="#5B6570"/><path d="M10.5 0.5v3h3" fill="none" stroke="#5B6570"/><path d="M7 6.5h5M7 8.5h4M5 10.5h7" stroke="#9AAABB" stroke-width="0.9"/><rect x="0" y="2" width="8" height="7" fill="#DA8512"/><path d="M6.2 4.2A2.3 2.3 0 1 0 6.2 6.8" stroke="#fff" stroke-width="1.5" fill="none"/></svg>
<span class="a" style="left:663px;top:438px;white-space:nowrap;font-size:12.5px">drv_can_static.c</span>
<div class="a" style="left:1177px;top:433px;width:30px;height:15px;border:1px solid #5E656C;border-radius:2px 2px 4px 4px;background:linear-gradient(#F8F8F8 0,#F0F0F0 45%,#DEDEDE 55%,#E2E2E2 100%);box-shadow:inset 0 0 0 1px #fff"></div>
<svg style="left:1177px;top:433px" width="30" height="15" viewBox="0 0 30 15"><path d="M14.5 1v13" stroke="#5E656C"/><path d="M9 3.5v7l-4-3.5z" fill="#A0A0A0"/><path d="M20 3.5v7l4-3.5z" fill="#A0A0A0"/></svg>
<div class="a" style="left:1210px;top:433px;width:16px;height:15px;border:1px solid #3E454C;border-radius:2px 2px 4px 4px;background:linear-gradient(#F8F8F8 0,#F0F0F0 45%,#DEDEDE 55%,#E2E2E2 100%);box-shadow:inset 0 0 0 1px #fff"></div>
<svg style="left:1210px;top:433px" width="16" height="15" viewBox="0 0 16 15"><path d="M4.5 5.5h7l-3.5 4z" fill="#2F3A42"/></svg>
<div class="a" style="left:1230px;top:433px;width:16px;height:15px;border:1px solid #3E454C;border-radius:2px 2px 4px 4px;background:linear-gradient(#F8F8F8 0,#F0F0F0 45%,#DEDEDE 55%,#E2E2E2 100%);box-shadow:inset 0 0 0 1px #fff"></div>
<svg style="left:1230px;top:433px" width="16" height="15" viewBox="0 0 16 15"><rect x="4.5" y="5.5" width="7" height="5" fill="none" stroke="#2F3A42" stroke-width="1.1"/><rect x="4" y="5" width="8" height="2" fill="#2F3A42"/></svg>
<div class="a" style="left:2px;top:454px;width:1245px;height:379px;border:1px solid #8A8E94;background:#F0F0F0"></div>
<div class="a" style="left:88px;top:454px;width:96px;height:1px;background:#F7F7F7"></div>
<div class="a" style="left:35px;top:455px;width:1px;height:377px;background:#9A9A9A"></div>
<div class="a" style="left:36px;top:455px;width:1188px;height:377px;background:#fff"></div>
<div class="a" style="left:37px;top:455px;width:1187px;height:27px;background:linear-gradient(#FFFFFF 0,#FFFFFF 33%,#F6F7F9 34%,#EDEEF1 100%)"></div>
<div class="a" style="left:37px;top:481px;width:1187px;height:1px;background:#D8D8D8"></div>
<div class="a" style="left:37px;top:483px;width:1187px;height:1px;background:#F2F2F2"></div>
<div class="a" style="left:419px;top:455px;width:1px;height:26px;background:#E4E4E4"></div>
<div class="a" style="left:688px;top:455px;width:1px;height:26px;background:#E4E4E4"></div>
<div class="a" style="left:956px;top:455px;width:1px;height:26px;background:#E4E4E4"></div>
<span class="a" style="left:42px;top:464px;white-space:nowrap;font-size:12.5px">Name</span>
<span class="a" style="left:424px;top:464px;white-space:nowrap;font-size:12.5px">Type</span>
<span class="a" style="left:694px;top:464px;white-space:nowrap;font-size:12.5px">Address</span>
<span class="a" style="left:962px;top:464px;white-space:nowrap;font-size:12.5px">Value</span>
<div class="row" style="top:482px;height:20px;background:#fff"></div>
<div class="a" style="left:37px;top:484px;width:11px;height:11px;border:1px solid #8A8A8A;border-radius:2px;background:linear-gradient(#FBFBFB 0,#F4F4F4 50%,#E2E2E2 55%,#E6E6E6)"></div>
<svg style="left:37px;top:484px" width="11" height="11" viewBox="0 0 11 11"><path d="M2 5.5h7" stroke="#2A3C8A" stroke-width="1.1"/></svg>
<div class="a" style="left:52px;top:484px;width:16px;height:16px;border:1px solid #8A8C8C;background:#FAFAFA"><div class="a" style="left:1px;top:1px;width:12px;height:12px;background:linear-gradient(135deg,#C6CBD4,#ECEDEF 70%,#F2F2F2)"></div></div>
<svg style="left:52px;top:484px" width="16" height="16" viewBox="0 0 16 16"><path d="M4.3 8.8L7.2 12.6L12.3 3.3" stroke="#3A4A9C" stroke-width="2.1" fill="none" stroke-linejoin="round"/></svg>
<svg style="left:75px;top:483px" width="17" height="15" viewBox="0 0 17 15"><path d="M4 0.6H12L15.6 4.4V6.2L8 13.6L0.4 6.2V4.4Z" fill="#D6ECF8" stroke="#2E5A78" stroke-width="1.2" stroke-linejoin="round"/><path d="M0.8 5.3H15.2" stroke="#8AA6B6" stroke-width="0.9"/><path d="M5.5 1L7 13M10.5 1L9 13" stroke="#B8D0DC" stroke-width="0.7" fill="none"/></svg>
<span class="a" style="left:94px;top:484px;white-space:nowrap;">appData</span>
<span class="a" style="left:423px;top:484px;white-space:nowrap;letter-spacing:0px">APP_DATA</span>
<span class="a" style="left:692px;top:484px;white-space:nowrap;">0xA0000224</span>
<div class="btn" style="left:674px;top:482px;height:18px;border-top:none;border-radius:0 0 3px 3px"><div class="dots"></div></div>
<div class="btn" style="left:942px;top:482px;height:18px;border-top:none;border-radius:0 0 3px 3px"><div class="dots"></div></div>
<div class="btn" style="left:1210px;top:482px;height:18px;border-top:none;border-radius:0 0 3px 3px"><div class="dots"></div></div>
<div class="row" style="top:502px;background:#fff"></div>
<svg style="left:61.5px;top:503.5px" width="16" height="16" viewBox="0 0 16 16"><path d="M8 0.7L15.3 8L8 15.3L0.7 8z" fill="#B4E29C" stroke="#4C9026" stroke-width="1.1"/><path d="M8 2.6L13.4 8L8 13.4L2.6 8z" fill="none" stroke="#D6F2C6" stroke-width="0.8" stroke-dasharray="1 1"/><path d="M8 4.2L11.8 8L8 11.8L4.2 8z" fill="#4A961C"/></svg>
<span class="a" style="left:80px;top:506px;white-space:nowrap;">currentState</span>
<span class="a" style="left:423px;top:506px;white-space:nowrap;letter-spacing:-0.35px">APP_STATES</span>
<span class="a" style="left:692px;top:506px;white-space:nowrap;">0xA0000224</span>
<span class="a" style="left:960px;top:506px;white-space:nowrap;letter-spacing:0px">APP_DRV_OPEN == (0x00000000)</span>
<div class="btn" style="left:674px;top:503px"><div class="dots"></div></div>
<div class="btn" style="left:942px;top:503px"><div class="dots"></div></div>
<div class="btn" style="left:1210px;top:503px"><div class="dots"></div></div>
<div class="row" style="top:524px;background:#fff"></div>
<svg style="left:61.5px;top:525.5px" width="16" height="16" viewBox="0 0 16 16"><path d="M8 0.7L15.3 8L8 15.3L0.7 8z" fill="#B4E29C" stroke="#4C9026" stroke-width="1.1"/><path d="M8 2.6L13.4 8L8 13.4L2.6 8z" fill="none" stroke="#D6F2C6" stroke-width="0.8" stroke-dasharray="1 1"/><path d="M8 4.2L11.8 8L8 11.8L4.2 8z" fill="#4A961C"/></svg>
<span class="a" style="left:80px;top:528px;white-space:nowrap;">prevState</span>
<span class="a" style="left:423px;top:528px;white-space:nowrap;letter-spacing:-0.35px">APP_STATES</span>
<span class="a" style="left:692px;top:528px;white-space:nowrap;">0xA0000228</span>
<span class="a" style="left:960px;top:528px;white-space:nowrap;letter-spacing:0px">APP_DRV_OPEN == (0x00000000)</span>
<div class="btn" style="left:674px;top:525px"><div class="dots"></div></div>
<div class="btn" style="left:942px;top:525px"><div class="dots"></div></div>
<div class="btn" style="left:1210px;top:525px"><div class="dots"></div></div>
<div class="row" style="top:546px;background:#fff"></div>
<div class="a" style="left:47px;top:550px;width:11px;height:11px;border:1px solid #8A8A8A;border-radius:2px;background:linear-gradient(#FBFBFB 0,#F4F4F4 50%,#E2E2E2 55%,#E6E6E6)"></div>
<svg style="left:47px;top:550px" width="11" height="11" viewBox="0 0 11 11"><path d="M2 5.5h7" stroke="#2A3C8A" stroke-width="1.1"/><path d="M5.5 2v7" stroke="#2A3C8A" stroke-width="1.1"/></svg>
<svg style="left:61.5px;top:547.5px" width="16" height="16" viewBox="0 0 16 16"><path d="M8 0.7L15.3 8L8 15.3L0.7 8z" fill="#B4E29C" stroke="#4C9026" stroke-width="1.1"/><path d="M8 2.6L13.4 8L8 13.4L2.6 8z" fill="none" stroke="#D6F2C6" stroke-width="0.8" stroke-dasharray="1 1"/><path d="M8 4.2L11.8 8L8 11.8L4.2 8z" fill="#4A961C"/></svg>
<span class="a" style="left:80px;top:550px;white-space:nowrap;">buffer</span>
<span class="a" style="left:423px;top:550px;white-space:nowrap;letter-spacing:0.4px">char[60]</span>
<span class="a" style="left:692px;top:550px;white-space:nowrap;">0xA000022C</span>
<span class="a" style="left:960px;top:550px;white-space:nowrap;letter-spacing:0.68px">"\\x 0\\x 0\\x 0\\x 0\\x 0\\x 0\\x 0\\x 0\\x...</span>
<div class="btn" style="left:674px;top:547px"><div class="dots"></div></div>
<div class="btn" style="left:942px;top:547px"><div class="dots"></div></div>
<div class="btn" style="left:1210px;top:547px"><div class="dots"></div></div>
<div class="row" style="top:568px;background:#fff"></div>
<svg style="left:61.5px;top:569.5px" width="16" height="16" viewBox="0 0 16 16"><path d="M8 0.7L15.3 8L8 15.3L0.7 8z" fill="#B4E29C" stroke="#4C9026" stroke-width="1.1"/><path d="M8 2.6L13.4 8L8 13.4L2.6 8z" fill="none" stroke="#D6F2C6" stroke-width="0.8" stroke-dasharray="1 1"/><path d="M8 4.2L11.8 8L8 11.8L4.2 8z" fill="#4A961C"/></svg>
<span class="a" style="left:80px;top:572px;white-space:nowrap;">bufferSize</span>
<span class="a" style="left:423px;top:572px;white-space:nowrap;letter-spacing:0px">__uint32_t</span>
<span class="a" style="left:692px;top:572px;white-space:nowrap;">0xA0000268</span>
<span class="a" style="left:960px;top:572px;white-space:nowrap;letter-spacing:0px">0x00000000</span>
<div class="btn" style="left:674px;top:569px"><div class="dots"></div></div>
<div class="btn" style="left:942px;top:569px"><div class="dots"></div></div>
<div class="btn" style="left:1210px;top:569px"><div class="dots"></div></div>
<div class="row" style="top:590px;background:#fff"></div>
<svg style="left:61.5px;top:591.5px" width="16" height="16" viewBox="0 0 16 16"><path d="M8 0.7L15.3 8L8 15.3L0.7 8z" fill="#B4E29C" stroke="#4C9026" stroke-width="1.1"/><path d="M8 2.6L13.4 8L8 13.4L2.6 8z" fill="none" stroke="#D6F2C6" stroke-width="0.8" stroke-dasharray="1 1"/><path d="M8 4.2L11.8 8L8 11.8L4.2 8z" fill="#4A961C"/></svg>
<span class="a" style="left:80px;top:594px;white-space:nowrap;">usrMsgIndex</span>
<span class="a" style="left:423px;top:594px;white-space:nowrap;letter-spacing:0px">__uint32_t</span>
<span class="a" style="left:692px;top:594px;white-space:nowrap;">0xA000026C</span>
<span class="a" style="left:960px;top:594px;white-space:nowrap;letter-spacing:0px">0x00000000</span>
<div class="btn" style="left:674px;top:591px"><div class="dots"></div></div>
<div class="btn" style="left:942px;top:591px"><div class="dots"></div></div>
<div class="btn" style="left:1210px;top:591px"><div class="dots"></div></div>
<div class="row" style="top:612px;background:#fff"></div>
<svg style="left:61.5px;top:613.5px" width="16" height="16" viewBox="0 0 16 16"><path d="M8 0.7L15.3 8L8 15.3L0.7 8z" fill="#B4E29C" stroke="#4C9026" stroke-width="1.1"/><path d="M8 2.6L13.4 8L8 13.4L2.6 8z" fill="none" stroke="#D6F2C6" stroke-width="0.8" stroke-dasharray="1 1"/><path d="M8 4.2L11.8 8L8 11.8L4.2 8z" fill="#4A961C"/></svg>
<span class="a" style="left:80px;top:616px;white-space:nowrap;">usartStatus</span>
<span class="a" style="left:423px;top:616px;white-space:nowrap;letter-spacing:-0.39px">DRV_USART_CLIENT_STATUS</span>
<span class="a" style="left:692px;top:616px;white-space:nowrap;">0xA0000270</span>
<span class="a" style="left:960px;top:616px;white-space:nowrap;letter-spacing:-0.42px">DRV_USART_CLIENT_STATUS_ERROR ==...</span>
<div class="btn" style="left:674px;top:613px"><div class="dots"></div></div>
<div class="btn" style="left:942px;top:613px"><div class="dots"></div></div>
<div class="btn" style="left:1210px;top:613px"><div class="dots"></div></div>
<div class="row" style="top:634px;background:#E4E4E4"></div>
<div class="a" style="left:36px;top:634px;width:1px;height:22px;background:#fff"></div>
<div class="a" style="left:419px;top:634px;width:1px;height:22px;background:#fff"></div>
<div class="a" style="left:688px;top:634px;width:1px;height:22px;background:#fff"></div>
<div class="a" style="left:956px;top:634px;width:1px;height:22px;background:#fff"></div>
<svg style="left:61.5px;top:635.5px" width="16" height="16" viewBox="0 0 16 16"><path d="M8 0.7L15.3 8L8 15.3L0.7 8z" fill="#B4E29C" stroke="#4C9026" stroke-width="1.1"/><path d="M8 2.6L13.4 8L8 13.4L2.6 8z" fill="none" stroke="#D6F2C6" stroke-width="0.8" stroke-dasharray="1 1"/><path d="M8 4.2L11.8 8L8 11.8L4.2 8z" fill="#4A961C"/></svg>
<span class="a" style="left:80px;top:638px;white-space:nowrap;">usartHandle</span>
<span class="a" style="left:423px;top:638px;white-space:nowrap;letter-spacing:0.27px">__uintptr_t</span>
<span class="a" style="left:692px;top:638px;white-space:nowrap;">0xA0000274</span>
<span class="a" style="left:960px;top:638px;white-space:nowrap;letter-spacing:0px">0xA0000284</span>
<div class="btn" style="left:674px;top:635px"><div class="dots"></div></div>
<div class="btn" style="left:942px;top:635px"><div class="dots"></div></div>
<div class="btn" style="left:1210px;top:635px"><div class="dots"></div></div>
<div class="row" style="top:656px;background:#fff"></div>
<svg style="left:61.5px;top:657.5px" width="16" height="16" viewBox="0 0 16 16"><path d="M8 0.7L15.3 8L8 15.3L0.7 8z" fill="#B4E29C" stroke="#4C9026" stroke-width="1.1"/><path d="M8 2.6L13.4 8L8 13.4L2.6 8z" fill="none" stroke="#D6F2C6" stroke-width="0.8" stroke-dasharray="1 1"/><path d="M8 4.2L11.8 8L8 11.8L4.2 8z" fill="#4A961C"/></svg>
<span class="a" style="left:80px;top:660px;white-space:nowrap;">usartBufferHandle</span>
<span class="a" style="left:423px;top:660px;white-space:nowrap;letter-spacing:0.27px">__uintptr_t</span>
<span class="a" style="left:692px;top:660px;white-space:nowrap;">0xA0000278</span>
<span class="a" style="left:960px;top:660px;white-space:nowrap;letter-spacing:0px">0xFFFFFFFF</span>
<div class="btn" style="left:674px;top:657px"><div class="dots"></div></div>
<div class="btn" style="left:942px;top:657px"><div class="dots"></div></div>
<div class="btn" style="left:1210px;top:657px"><div class="dots"></div></div>
<div class="row" style="top:678px;background:#fff"></div>
<svg style="left:61.5px;top:679.5px" width="16" height="16" viewBox="0 0 16 16"><path d="M8 0.7L15.3 8L8 15.3L0.7 8z" fill="#B4E29C" stroke="#4C9026" stroke-width="1.1"/><path d="M8 2.6L13.4 8L8 13.4L2.6 8z" fill="none" stroke="#D6F2C6" stroke-width="0.8" stroke-dasharray="1 1"/><path d="M8 4.2L11.8 8L8 11.8L4.2 8z" fill="#4A961C"/></svg>
<span class="a" style="left:80px;top:682px;white-space:nowrap;">usartBufferEvent</span>
<span class="a" style="left:423px;top:682px;white-space:nowrap;letter-spacing:-0.68px">DRV_USART_BUFFER_EVENT</span>
<span class="a" style="left:692px;top:682px;white-space:nowrap;">0xA000027C</span>
<span class="a" style="left:960px;top:682px;white-space:nowrap;letter-spacing:-0.51px">DRV_USART_BUFFER_EVENT_ERROR == ...</span>
<div class="btn" style="left:674px;top:679px"><div class="dots"></div></div>
<div class="btn" style="left:942px;top:679px"><div class="dots"></div></div>
<div class="btn" style="left:1210px;top:679px"><div class="dots"></div></div>
<div class="row" style="top:700px;background:#fff"></div>
<svg style="left:61.5px;top:701.5px" width="16" height="16" viewBox="0 0 16 16"><path d="M8 0.7L15.3 8L8 15.3L0.7 8z" fill="#B4E29C" stroke="#4C9026" stroke-width="1.1"/><path d="M8 2.6L13.4 8L8 13.4L2.6 8z" fill="none" stroke="#D6F2C6" stroke-width="0.8" stroke-dasharray="1 1"/><path d="M8 4.2L11.8 8L8 11.8L4.2 8z" fill="#4A961C"/></svg>
<span class="a" style="left:80px;top:704px;white-space:nowrap;">drvBufferEventComplete</span>
<span class="a" style="left:423px;top:704px;white-space:nowrap;letter-spacing:0px">bool</span>
<span class="a" style="left:692px;top:704px;white-space:nowrap;">0xA0000280</span>
<span class="a" style="left:960px;top:704px;white-space:nowrap;letter-spacing:0px">0x00</span>
<div class="btn" style="left:674px;top:701px"><div class="dots"></div></div>
<div class="btn" style="left:942px;top:701px"><div class="dots"></div></div>
<div class="btn" style="left:1210px;top:701px"><div class="dots"></div></div>
<div class="row" style="top:722px;background:#fff"></div>
<svg style="left:61.5px;top:723.5px" width="16" height="16" viewBox="0 0 16 16"><path d="M8 0.7L15.3 8L8 15.3L0.7 8z" fill="#B4E29C" stroke="#4C9026" stroke-width="1.1"/><path d="M8 2.6L13.4 8L8 13.4L2.6 8z" fill="none" stroke="#D6F2C6" stroke-width="0.8" stroke-dasharray="1 1"/><path d="M8 4.2L11.8 8L8 11.8L4.2 8z" fill="#4A961C"/></svg>
<span class="a" style="left:80px;top:726px;white-space:nowrap;">usrBufferEventComplete</span>
<span class="a" style="left:423px;top:726px;white-space:nowrap;letter-spacing:0px">bool</span>
<span class="a" style="left:692px;top:726px;white-space:nowrap;">0xA0000281</span>
<span class="a" style="left:960px;top:726px;white-space:nowrap;letter-spacing:0px">0x00</span>
<div class="btn" style="left:674px;top:723px"><div class="dots"></div></div>
<div class="btn" style="left:942px;top:723px"><div class="dots"></div></div>
<div class="btn" style="left:1210px;top:723px"><div class="dots"></div></div>
<div class="row" style="top:744px;background:#fff"></div>
<div class="a" style="left:37px;top:748px;width:11px;height:11px;border:1px solid #8A8A8A;border-radius:2px;background:linear-gradient(#FBFBFB 0,#F4F4F4 50%,#E2E2E2 55%,#E6E6E6)"></div>
<svg style="left:37px;top:748px" width="11" height="11" viewBox="0 0 11 11"><path d="M2 5.5h7" stroke="#2A3C8A" stroke-width="1.1"/><path d="M5.5 2v7" stroke="#2A3C8A" stroke-width="1.1"/></svg>
<div class="a" style="left:52px;top:748px;width:16px;height:16px;border:1px solid #8A8C8C;background:#FAFAFA"><div class="a" style="left:1px;top:1px;width:12px;height:12px;background:linear-gradient(135deg,#C6CBD4,#ECEDEF 70%,#F2F2F2)"></div></div>
<svg style="left:52px;top:748px" width="16" height="16" viewBox="0 0 16 16"><path d="M4.3 8.8L7.2 12.6L12.3 3.3" stroke="#3A4A9C" stroke-width="2.1" fill="none" stroke-linejoin="round"/></svg>
<svg style="left:75px;top:747px" width="17" height="15" viewBox="0 0 17 15"><path d="M4 0.6H12L15.6 4.4V6.2L8 13.6L0.4 6.2V4.4Z" fill="#D6ECF8" stroke="#2E5A78" stroke-width="1.2" stroke-linejoin="round"/><path d="M0.8 5.3H15.2" stroke="#8AA6B6" stroke-width="0.9"/><path d="M5.5 1L7 13M10.5 1L9 13" stroke="#B8D0DC" stroke-width="0.7" fill="none"/></svg>
<span class="a" style="left:94px;top:748px;white-space:nowrap;">gDrvUSARTObj</span>
<span class="a" style="left:423px;top:748px;white-space:nowrap;letter-spacing:-0.31px">DRV_USART_OBJ[1]</span>
<span class="a" style="left:692px;top:748px;white-space:nowrap;">0xA00002C8</span>
<div class="btn" style="left:674px;top:745px"><div class="dots"></div></div>
<div class="btn" style="left:942px;top:745px"><div class="dots"></div></div>
<div class="btn" style="left:1210px;top:745px"><div class="dots"></div></div>
<div class="row" style="top:766px;background:#fff"></div>
<div class="a" style="left:37px;top:770px;width:11px;height:11px;border:1px solid #8A8A8A;border-radius:2px;background:linear-gradient(#FBFBFB 0,#F4F4F4 50%,#E2E2E2 55%,#E6E6E6)"></div>
<svg style="left:37px;top:770px" width="11" height="11" viewBox="0 0 11 11"><path d="M2 5.5h7" stroke="#2A3C8A" stroke-width="1.1"/><path d="M5.5 2v7" stroke="#2A3C8A" stroke-width="1.1"/></svg>
<div class="a" style="left:52px;top:770px;width:16px;height:16px;border:1px solid #8A8C8C;background:#FAFAFA"><div class="a" style="left:1px;top:1px;width:12px;height:12px;background:linear-gradient(135deg,#C6CBD4,#ECEDEF 70%,#F2F2F2)"></div></div>
<svg style="left:52px;top:770px" width="16" height="16" viewBox="0 0 16 16"><path d="M4.3 8.8L7.2 12.6L12.3 3.3" stroke="#3A4A9C" stroke-width="2.1" fill="none" stroke-linejoin="round"/></svg>
<svg style="left:75px;top:769px" width="17" height="15" viewBox="0 0 17 15"><path d="M4 0.6H12L15.6 4.4V6.2L8 13.6L0.4 6.2V4.4Z" fill="#D6ECF8" stroke="#2E5A78" stroke-width="1.2" stroke-linejoin="round"/><path d="M0.8 5.3H15.2" stroke="#8AA6B6" stroke-width="0.9"/><path d="M5.5 1L7 13M10.5 1L9 13" stroke="#B8D0DC" stroke-width="0.7" fill="none"/></svg>
<span class="a" style="left:94px;top:770px;white-space:nowrap;">gDrvUSARTClientObj</span>
<span class="a" style="left:423px;top:770px;white-space:nowrap;letter-spacing:-0.39px">DRV_USART_CLIENT_OBJ[1]</span>
<span class="a" style="left:692px;top:770px;white-space:nowrap;">0xA0000284</span>
<div class="btn" style="left:674px;top:767px"><div class="dots"></div></div>
<div class="btn" style="left:942px;top:767px"><div class="dots"></div></div>
<div class="btn" style="left:1210px;top:767px"><div class="dots"></div></div>
<div class="row" style="top:788px;background:#fff"></div>
<div class="a" style="left:37px;top:792px;width:11px;height:11px;border:1px solid #8A8A8A;border-radius:2px;background:linear-gradient(#FBFBFB 0,#F4F4F4 50%,#E2E2E2 55%,#E6E6E6)"></div>
<svg style="left:37px;top:792px" width="11" height="11" viewBox="0 0 11 11"><path d="M2 5.5h7" stroke="#2A3C8A" stroke-width="1.1"/><path d="M5.5 2v7" stroke="#2A3C8A" stroke-width="1.1"/></svg>
<div class="a" style="left:52px;top:792px;width:16px;height:16px;border:1px solid #8A8C8C;background:#FAFAFA"><div class="a" style="left:1px;top:1px;width:12px;height:12px;background:linear-gradient(135deg,#C6CBD4,#ECEDEF 70%,#F2F2F2)"></div></div>
<svg style="left:52px;top:792px" width="16" height="16" viewBox="0 0 16 16"><path d="M4.3 8.8L7.2 12.6L12.3 3.3" stroke="#3A4A9C" stroke-width="2.1" fill="none" stroke-linejoin="round"/></svg>
<svg style="left:75px;top:791px" width="17" height="15" viewBox="0 0 17 15"><path d="M4 0.6H12L15.6 4.4V6.2L8 13.6L0.4 6.2V4.4Z" fill="#D6ECF8" stroke="#2E5A78" stroke-width="1.2" stroke-linejoin="round"/><path d="M0.8 5.3H15.2" stroke="#8AA6B6" stroke-width="0.9"/><path d="M5.5 1L7 13M10.5 1L9 13" stroke="#B8D0DC" stroke-width="0.7" fill="none"/></svg>
<span class="a" style="left:94px;top:792px;white-space:nowrap;">gDrvUSARTCommonDataObj</span>
<span class="a" style="left:423px;top:792px;white-space:nowrap;letter-spacing:-0.48px">DRV_USART_COMMON_DATA_OBJ</span>
<span class="a" style="left:692px;top:792px;white-space:nowrap;">0xA0000218</span>
<div class="btn" style="left:674px;top:789px"><div class="dots"></div></div>
<div class="btn" style="left:942px;top:789px"><div class="dots"></div></div>
<div class="btn" style="left:1210px;top:789px"><div class="dots"></div></div>
<div class="row" style="top:810px;background:#fff"></div>
<svg style="left:50px;top:813px" width="13" height="16" viewBox="0 0 13 16"><path d="M0.5 0.5h8l4 4v11h-12z" fill="#E8EFF8" stroke="#4A5A6A"/><path d="M8.5 0.5v4h4" fill="none" stroke="#4A5A6A"/></svg>
<span class="a" style="left:70px;top:814px;white-space:nowrap;color:#7A7A7A;letter-spacing:0.3px">&lt;Enter new watch&gt;</span>
<div class="btn" style="left:674px;top:811px"><div class="dots"></div></div>
<div class="btn" style="left:942px;top:811px"><div class="dots"></div></div>
<div class="btn" style="left:1210px;top:811px"><div class="dots"></div></div>
<div class="a" style="left:7px;top:459px;width:24px;height:22px;border:1px solid #505050;border-radius:4px;background:linear-gradient(#D4D4D4 0,#E4E4E4 35%,#E8E8E8 70%,#E0E0E0);box-shadow:inset 1px 1px 1px rgba(0,0,0,0.1)"></div>
<svg style="left:11px;top:462px" width="16" height="16" viewBox="0 0 16 16"><path d="M8 0.7L15.3 8L8 15.3L0.7 8z" fill="#B4E29C" stroke="#4C9026" stroke-width="1.1"/><path d="M8 2.6L13.4 8L8 13.4L2.6 8z" fill="none" stroke="#D6F2C6" stroke-width="0.8" stroke-dasharray="1 1"/><path d="M8 4.2L11.8 8L8 11.8L4.2 8z" fill="#4A961C"/></svg>
<svg style="left:10px;top:489px" width="18" height="17" viewBox="0 0 18 17"><path d="M6.5 0.6H13.5L16.6 4V5.6L10 12L3.4 5.6V4Z" fill="#D6ECF8" stroke="#2E5A78" stroke-width="1.1" stroke-linejoin="round"/><path d="M3.6 4.6H16.4" stroke="#8AA6B6" stroke-width="0.8"/><path d="M8 1L9.2 11M12 1L10.8 11" stroke="#B8D0DC" stroke-width="0.6"/><path d="M0.5 8.5h5l1 1.5h6v6.5h-12z" fill="#FFF000" stroke="#A8A040" stroke-width="0.7"/><path d="M0.5 10.5h12" stroke="#8A8A8A" stroke-width="1"/></svg>
<svg style="left:10px;top:516px" width="18" height="17" viewBox="0 0 18 17"><path d="M6.5 0.6H13.5L16.6 4V5.6L10 12L3.4 5.6V4Z" fill="#D6ECF8" stroke="#2E5A78" stroke-width="1.1" stroke-linejoin="round"/><path d="M3.6 4.6H16.4" stroke="#8AA6B6" stroke-width="0.8"/><path d="M8 1L9.2 11M12 1L10.8 11" stroke="#B8D0DC" stroke-width="0.6"/><rect x="0.5" y="7.5" width="12" height="9" fill="#3A6C94" stroke="#23486A"/><rect x="2.5" y="8.5" width="8" height="3" fill="#F2F2F2"/><rect x="7" y="13.5" width="3" height="2.5" fill="#B8C8D8"/></svg>
<svg style="left:13px;top:541px" width="13" height="17" viewBox="0 0 13 17"><text x="6.5" y="14.5" font-size="16" font-weight="bold" font-family="Liberation Sans" fill="#F0F0F0" stroke="#50565C" stroke-width="1.6" paint-order="stroke" text-anchor="middle">$</text></svg>
<div class="a" style="left:1226px;top:456px;width:19px;height:27px;border:1px solid #777;border-radius:3px;background:linear-gradient(#F6F6F6,#E8E8E8 50%,#D6D6D6)"></div>
<svg style="left:1228px;top:460px" width="15" height="15" viewBox="0 0 15 15"><rect x="2" y="1" width="13" height="12" fill="#C8C8F0" stroke="#7070B0" stroke-width="0.8"/><path d="M2 5h13M2 9h13M6 1v12M10 1v12" stroke="#9090D0" stroke-width="0.6"/><path d="M4.5 0.5l1 2.5 2.5 0.5-2 2 0.5 2.5-2-1.3-2.2 1.3 0.5-2.5-2-2 2.5-0.5z" fill="#F8D020" stroke="#C08010" stroke-width="0.5"/><path d="M5 5l8 8" stroke="#111" stroke-width="2"/></svg>
<div class="a" style="left:1226px;top:485px;width:19px;height:347px;background:linear-gradient(90deg,#E6E6E6,#F2F2F2 40%,#EEEEEE 80%,#E8E8E8)"></div>
<svg style="left:1231px;top:491px" width="10" height="6" viewBox="0 0 10 6"><path d="M0.5 5.5L5 1L9.5 5.5z" fill="#1E1E1E"/></svg>
<svg style="left:1231px;top:817px" width="10" height="6" viewBox="0 0 10 6"><path d="M0.5 0.5L5 5L9.5 0.5z" fill="#1E1E1E"/></svg>
<div class="a" style="left:1227px;top:510px;width:17px;height:299px;border:1px solid #9C9C9C;border-radius:2px;background:linear-gradient(90deg,#F4F4F4,#E6E6E6 50%,#CCCCCC)"></div>
<svg style="left:1231px;top:654px" width="10" height="10" viewBox="0 0 10 10"><path d="M1 1.5h8M1 4.5h8M1 7.5h8" stroke="#555" stroke-width="1"/></svg>
<span class="a" style="left:670px;top:839px;white-space:nowrap;font-size:13px">usart_echo (Build, Load, ...)</span>
<div class="a" style="left:834px;top:837px;width:199px;height:18px;border:1px solid #A8A8A8;border-radius:2px;background:linear-gradient(#F2F2F2,#DCDCDC 40%,#D0D0D0 80%,#E0E0E0)"></div>
<div class="a" style="left:834px;top:837px;width:2px;height:18px;background:#2C5AA0"></div>
<span class="a" style="left:887px;top:838px;white-space:nowrap;font-size:13px;color:#5B9BEA">debugger halted</span>
<svg style="left:1039px;top:841px" width="11" height="11" viewBox="0 0 11 11"><rect x="0.5" y="0.5" width="10" height="10" fill="#F2F2F2" stroke="#454B52"/><path d="M3 3L8 8M8 3L3 8" stroke="#3A3A3A" stroke-width="2.4" stroke-linecap="round"/><path d="M3 3L8 8M8 3L3 8" stroke="#E8E8E8" stroke-width="0.7" stroke-linecap="round"/></svg>
<svg style="left:1069px;top:839px" width="18" height="18" viewBox="0 0 18 18"><path d="M7 0.8h3a5.8 5.8 0 0 1 0 11.6h-0.5l2.8 3.8l-4.8-3.8h-0.5a5.8 5.8 0 0 1 0-11.6z" fill="#E6EEF6" stroke="#4A5660" stroke-width="1"/><text x="8.5" y="10.8" font-size="11" font-weight="bold" font-family="Liberation Sans" text-anchor="middle">3</text></svg>
<div class="a" style="left:1089px;top:838px;width:1px;height:18px;background:#A8A8A8"></div>
<span class="a" style="left:1127px;top:840px;white-space:nowrap;font-size:13.5px">61:1/1:66</span>
<div class="a" style="left:1219px;top:838px;width:1px;height:17px;background:#A8A8A8"></div>
<span class="a" style="left:1223px;top:841px;white-space:nowrap;font-size:12px">INS</span>
<svg style="left:0;top:0" width="1254" height="864" viewBox="0 0 1254 864">
<defs><filter id="sh" x="-30%" y="-10%" width="160%" height="120%"><feGaussianBlur in="SourceAlpha" stdDeviation="1.6"/><feOffset dx="-2" dy="1"/><feComponentTransfer><feFuncA type="linear" slope="0.3"/></feComponentTransfer><feMerge><feMergeNode/><feMergeNode in="SourceGraphic"/></feMerge></filter></defs>
<g filter="url(#sh)" fill="#E8453C">
<path d="M278 205L274 728" stroke="#E8453C" stroke-width="10" stroke-linecap="round"/>
<path d="M259 725.5L288.5 726L273.5 755.5z"/>
<path d="M957.8 654.6L866 740" stroke="#E8453C" stroke-width="10" stroke-linecap="round"/>
<path d="M855.6 729.3L876.2 750L844.7 759.8z"/>
</g>
<rect x="34.5" y="765.5" width="812" height="22" fill="none" stroke="#E8453C" stroke-width="3"/>
</svg>
</body></html>
